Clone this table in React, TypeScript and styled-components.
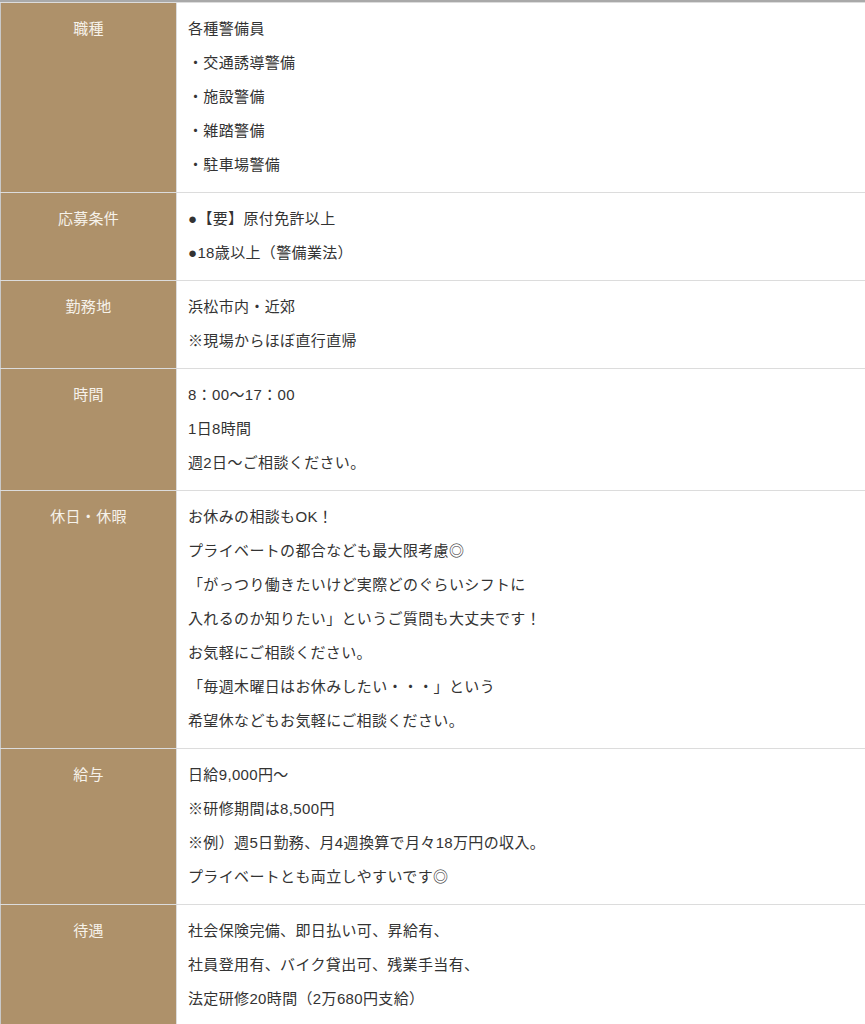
import React from "react";
import styled, { createGlobalStyle } from "styled-components";

const Global = createGlobalStyle`
  html, body { margin: 0; padding: 0; background: #fff; }
  body { font-family: "Liberation Sans", "Noto Sans CJK JP", sans-serif; }
`;

const Wrap = styled.div`
  border-top: 2px solid #a9a9a9;
  width: 865px;
`;

const Table = styled.table`
  width: 100%;
  border-collapse: collapse;
  table-layout: fixed;
`;

const Th = styled.th`
  width: 176px;
  background: #ae916a;
  color: #f6f2ea;
  font-weight: normal;
  font-size: 15px;
  line-height: 34px;
  letter-spacing: 0.3px;
  text-align: center;
  vertical-align: top;
  padding: 9px 8px 10px;
  border: 1px solid #dcdcdc;
  border-left-color: #c9c9c9;
  box-sizing: border-box;
`;

const Td = styled.td`
  background: #fff;
  color: #333;
  font-size: 15px;
  line-height: 34px;
  letter-spacing: 0.35px;
  vertical-align: top;
  padding: 9px 12px 10px 11px;
  border: 1px solid #dcdcdc;
  border-right: none;
`;

const Line = styled.p`
  margin: 0;
  white-space: nowrap;
`;

const rows: { label: string; lines: string[] }[] = [
  {
    label: "職種",
    lines: ["各種警備員", "・交通誘導警備", "・施設警備", "・雑踏警備", "・駐車場警備"],
  },
  { label: "応募条件", lines: ["●【要】原付免許以上", "●18歳以上（警備業法）"] },
  { label: "勤務地", lines: ["浜松市内・近郊", "※現場からほぼ直行直帰"] },
  { label: "時間", lines: ["8：00〜17：00", "1日8時間", "週2日〜ご相談ください。"] },
  {
    label: "休日・休暇",
    lines: [
      "お休みの相談もOK！",
      "プライベートの都合なども最大限考慮◎",
      "「がっつり働きたいけど実際どのぐらいシフトに",
      "入れるのか知りたい」というご質問も大丈夫です！",
      "お気軽にご相談ください。",
      "「毎週木曜日はお休みしたい・・・」という",
      "希望休などもお気軽にご相談ください。",
    ],
  },
  {
    label: "給与",
    lines: [
      "日給9,000円〜",
      "※研修期間は8,500円",
      "※例）週5日勤務、月4週換算で月々18万円の収入。",
      "プライベートとも両立しやすいです◎",
    ],
  },
  {
    label: "待遇",
    lines: [
      "社会保険完備、即日払い可、昇給有、",
      "社員登用有、バイク貸出可、残業手当有、",
      "法定研修20時間（2万680円支給）",
    ],
  },
];

export default function App() {
  return (
    <>
      <Global />
      <Wrap>
        <Table>
          <tbody>
            {rows.map((r) => (
              <tr key={r.label}>
                <Th>{r.label}</Th>
                <Td>
                  {r.lines.map((l, i) => (
                    <Line key={i}>{l}</Line>
                  ))}
                </Td>
              </tr>
            ))}
          </tbody>
        </Table>
      </Wrap>
    </>
  );
}
